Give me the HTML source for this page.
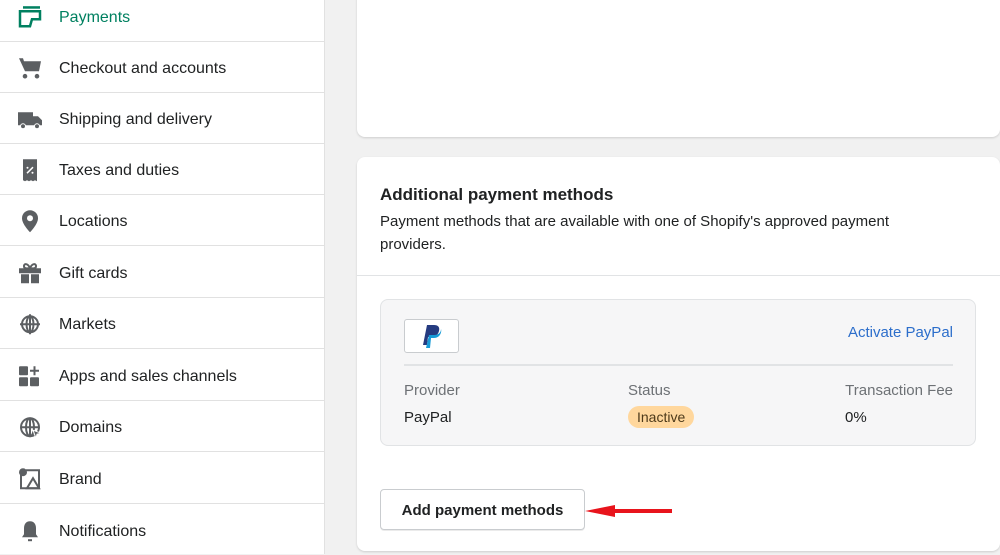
<!DOCTYPE html><html><head><style>
body{margin:0;width:1000px;height:554px;overflow:hidden;background:#f1f1f1;font-family:"Liberation Sans",sans-serif;position:relative}
.side{position:absolute;left:0;top:0;width:324px;height:554px;background:#fff;border-right:1px solid #e1e1e1}
.row{position:absolute;left:0;width:324px;height:51px;border-bottom:1px solid #e1e1e1;box-sizing:border-box}
.row span{position:absolute;left:59px;font-size:16px;color:#202223;top:50%;transform:translateY(-40%)}
.row svg{position:absolute;left:18px;top:50%;transform:translateY(-45%)}
.card{position:absolute;left:357px;width:643px;background:#fff;border-radius:8px;box-shadow:0 1px 2px rgba(0,0,0,.15)}
.t{position:absolute;font-size:16px;color:#202223}
.g{color:#6d7175}
</style></head><body>
<div class="side">
<div class="row" style="top:-9px;height:51px"><svg width="24" height="24" viewBox="0 0 24 24"><rect x="5" y="1" width="17" height="2.5" fill="#008060"/><path d="M2 6h20v8h-8l-2 7H2z" fill="none" stroke="#008060" stroke-width="2.5"/></svg><span style="color:#008060">Payments</span></div>
<div class="row" style="top:42px"><svg width="24" height="24" viewBox="0 0 24 24"><path d="M1 2h4l1 3h17l-2 10H7z" fill="#5c5f62"/><circle cx="7" cy="20" r="2.3" fill="#5c5f62"/><circle cx="19" cy="20" r="2.3" fill="#5c5f62"/></svg><span>Checkout and accounts</span></div>
<div class="row" style="top:93px"><svg width="24" height="24" viewBox="0 0 24 24"><path d="M0 5h15v13H0zM15 9h5l4 4v5h-9z" fill="#5c5f62"/><circle cx="5" cy="19" r="2.5" fill="#5c5f62" stroke="#fff"/><circle cx="19" cy="19" r="2.5" fill="#5c5f62" stroke="#fff"/></svg><span>Shipping and delivery</span></div>
<div class="row" style="top:144px"><svg width="24" height="24" viewBox="0 0 24 24"><path d="M5 1h14v22l-2-1-2 1-2-1-2 1-2-1-2 1-2-1z" fill="#5c5f62"/><path d="M9 15l6-6" stroke="#fff" stroke-width="1.5"/><circle cx="9.5" cy="9.5" r="1" fill="#fff"/><circle cx="14.5" cy="14.5" r="1" fill="#fff"/></svg><span>Taxes and duties</span></div>
<div class="row" style="top:195px"><svg width="24" height="24" viewBox="0 0 24 24"><path d="M12 1a8 8 0 0 0-8 8c0 6 8 14 8 14s8-8 8-14a8 8 0 0 0-8-8z" fill="#5c5f62"/><circle cx="12" cy="9" r="3" fill="#fff"/></svg><span>Locations</span></div>
<div class="row" style="top:247px"><svg width="24" height="24" viewBox="0 0 24 24"><path d="M1 7h22v5H1zM3 13h8v9H3zM13 13h8v9h-8z" fill="#5c5f62"/><path d="M12 7C10 2 6 2 6 5s4 2 6 2c2 0 6 1 6-2s-4-3-6 2" fill="none" stroke="#5c5f62" stroke-width="2"/></svg><span>Gift cards</span></div>
<div class="row" style="top:298px"><svg width="24" height="24" viewBox="0 0 24 24"><circle cx="12" cy="12" r="8" fill="none" stroke="#5c5f62" stroke-width="2"/><path d="M2 12h20M12 2v20" stroke="#5c5f62" stroke-width="2"/><ellipse cx="12" cy="12" rx="3.5" ry="8" fill="none" stroke="#5c5f62" stroke-width="2"/></svg><span>Markets</span></div>
<div class="row" style="top:350px"><svg width="24" height="24" viewBox="0 0 24 24"><rect x="1" y="2" width="9" height="9" rx="1" fill="#5c5f62"/><rect x="1" y="13" width="9" height="9" rx="1" fill="#5c5f62"/><rect x="12" y="13" width="9" height="9" rx="1" fill="#5c5f62"/><path d="M16.5 2v9M12 6.5h9" stroke="#5c5f62" stroke-width="2"/></svg><span>Apps and sales channels</span></div>
<div class="row" style="top:401px"><svg width="24" height="24" viewBox="0 0 24 24"><circle cx="12" cy="12" r="9" fill="none" stroke="#5c5f62" stroke-width="2"/><path d="M3 12h18M12 3v18" stroke="#5c5f62" stroke-width="2"/><ellipse cx="12" cy="12" rx="4" ry="9" fill="none" stroke="#5c5f62" stroke-width="2"/><path d="M15 15l8 3-4 1-1 4z" fill="#5c5f62" stroke="#fff"/></svg><span>Domains</span></div>
<div class="row" style="top:453px"><svg width="24" height="24" viewBox="0 0 24 24"><path d="M3 6v15h18V3H8" fill="none" stroke="#5c5f62" stroke-width="2"/><circle cx="5" cy="5" r="4" fill="#5c5f62"/><path d="M9 21l6-10 6 10z" fill="none" stroke="#5c5f62" stroke-width="2"/></svg><span>Brand</span></div>
<div class="row" style="top:504px;border:0"><svg width="24" height="24" viewBox="0 0 24 24"><path d="M12 2c-4 0-6 3-6 7v6l-2 3h16l-2-3V9c0-4-2-7-6-7z" fill="#5c5f62"/><rect x="10" y="20" width="4" height="2" fill="#5c5f62"/></svg><span>Notifications</span></div>
</div>
<div class="card" style="top:-10px;height:147px"></div>
<div class="card" style="top:157px;height:394px">
<div class="t" style="left:23px;top:28px;font-size:17px;font-weight:bold;color:#202223">Additional payment methods</div>
<div class="t" style="left:23px;top:53px;font-size:15px;line-height:23px;width:560px">Payment methods that are available with one of Shopify's approved payment providers.</div>
<div style="position:absolute;left:0;right:0;top:118px;border-top:1px solid #e1e3e5"></div>
<div style="position:absolute;left:23px;top:142px;width:596px;height:147px;background:#f6f6f7;border:1px solid #e1e3e5;border-radius:8px;box-sizing:border-box">
<div style="position:absolute;left:23px;top:19px;width:55px;height:34px;background:#fff;border:1px solid #c9cccf;border-radius:3px;box-sizing:border-box"><svg width="53" height="33" viewBox="0 0 53 33" style="position:absolute;left:-1px;top:-1px"><path d="M19 26l4-20h7c4 0 6 2 5 6s-4 6-8 6h-3l-1 8z" fill="#253b80"/><path d="M22 29l3-13h5c4 0 7-2 7-6 1 3-1 9-7 9h-3l-1 10z" fill="#179bd7"/></svg></div>
<div class="t" style="right:22px;top:24px;color:#2c6ecb;font-size:15px">Activate PayPal</div>
<div style="position:absolute;left:23px;right:22px;top:64px;border-top:2px solid #e1e3e5"></div>
<div class="t g" style="left:23px;top:82px;font-size:15px">Provider</div>
<div class="t" style="left:23px;top:109px;font-size:15px">PayPal</div>
<div class="t g" style="left:247px;top:82px;font-size:15px">Status</div>
<div class="t" style="left:247px;top:106px;font-size:14px;background:#ffd79d;border-radius:12px;padding:3px 9px;color:#4d3a1a">Inactive</div>
<div class="t g" style="right:22px;top:82px;font-size:15px">Transaction Fee</div>
<div class="t" style="left:464px;top:109px;font-size:15px">0%</div>
</div>
<div style="position:absolute;left:23px;top:332px;width:205px;height:41px;border:1px solid #c9cccf;border-radius:4px;box-sizing:border-box;box-shadow:0 1px 0 rgba(0,0,0,.08);font-size:15px;font-weight:bold;color:#202223;text-align:center;line-height:41px">Add payment methods</div>
<svg style="position:absolute;left:228px;top:344px" width="90" height="20"><path d="M0 10L30 4v4h57v4H30v4z" fill="#e8141c"/></svg>
</div>
</body></html>
